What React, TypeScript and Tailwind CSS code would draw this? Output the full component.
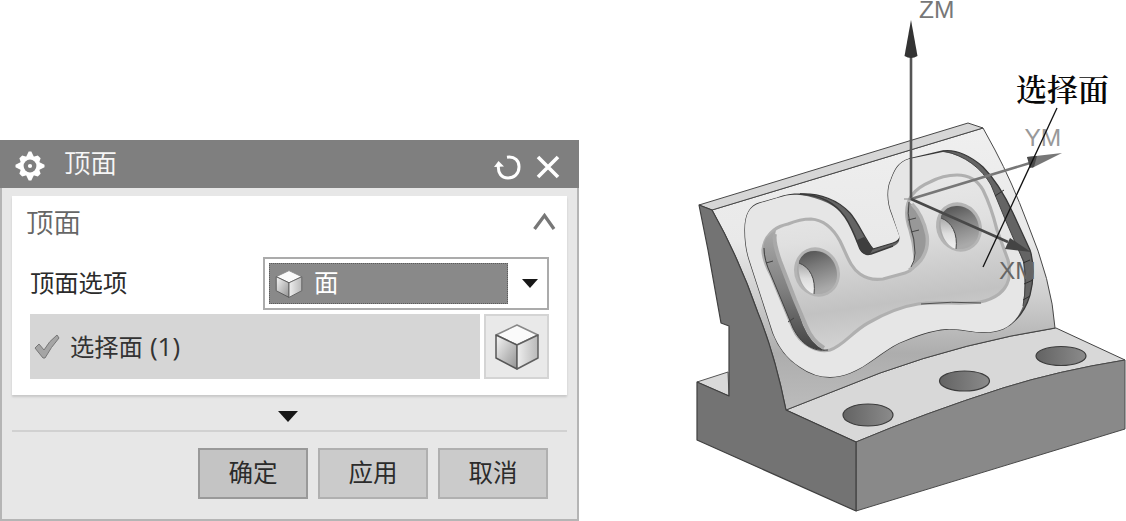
import React from "react";

const OUTER_POCKET =
  "M745 230C745 215 749 206 760 203L777 198C786 195 792 194 800 194C820 193 838 200 850 213C858 222 865 239 873 249L893 243Q900 241 900 236L892 214C887 202 887 188 891 180C895 169 899 162 909 159L943 151C957 149 972 157 983 167C997 181 1006 198 1013 213L1030 250C1034 262 1034 280 1030 295C1025 312 1015 323 1003 329C983 337 965 328 947 329C931 330 915 336 899 343C881 352 868 366 850 373Q840 377 830 377Q814 377 800 367C786 358 778 346 773 333L750 262Q745 248 745 230Z";

const RING =
  "M745 230C745 215 749 206 760 203L777 198C786 195 792 194 800 195C822 198 837 206 845 217C853 229 857 242 860 249Q864 256 871 254L894 246Q901 243 899 235L892 214C887 202 887 188 891 180C895 169 899 162 909 159L943 152C965 155 982 169 991 185L1005 219L1018 249L1023 262Q1026 284 1023 306C1019 317 1012 325 1003 329C983 337 965 328 947 329C931 330 915 336 899 343C881 352 868 366 850 373Q840 377 830 377Q814 377 800 367C786 358 778 346 773 333L750 262Q745 248 745 230Z";

const INNER_POCKET =
  "M763 250Q764 238 774 230Q779 226 788 224Q800 219 811 219C825 220 834 230 840 241C847 255 850 267 860 274Q870 281 883 279L905 273Q916 270 915 258Q914 243 910 230C905 216 905 205 912 195Q918 187 930 182Q943 175 957 175C970 175 978 181 983 190C990 204 994 218 997 230L1008 260C1012 275 1008 287 999 294Q991 300 980 302C960 305 938 301 918 304C898 307 882 315 868 323C852 332 843 346 830 350C817 353 800 344 793 328L771 275Q763 260 763 250Z";

function Bore() {
  return (
    <>
      <ellipse cx="817" cy="272" rx="21" ry="23.5" transform="rotate(-25 817 272)" fill="#a9a9a9" stroke="#b4b4b4" strokeWidth="3" />
      <path d="M799 261Q804 250 816 251C829 252 837 263 837 275C837 287 828 295 815 294Q801 287 799 272Z" fill="url(#bore)" />
      <path d="M799 263C810 267 816 279 814 294C804 291 797 278 799 263Z" fill="url(#glint)" />
      <path d="M799 263C810 267 816 279 814 294" stroke="#484848" />
    </>
  );
}

function PartDrawing() {
  return (
    <svg
      className="block shrink-0"
      width="547"
      height="521"
      viewBox="579 0 547 521"
      fill="none"
      strokeLinejoin="round"
      role="img"
    >
      <defs>
        <linearGradient id="surface" x1="0" y1="0" x2="0" y2="1">
          <stop offset="0" stopColor="#efefef" />
          <stop offset="0.4" stopColor="#e9e9e9" />
          <stop offset="0.6" stopColor="#cecece" />
          <stop offset="0.8" stopColor="#adadad" />
          <stop offset="1" stopColor="#bcbcbc" />
        </linearGradient>
        <linearGradient id="floor" x1="0" y1="0" x2="0.2" y2="1">
          <stop offset="0" stopColor="#ececec" />
          <stop offset="0.4" stopColor="#e0e0e0" />
          <stop offset="0.8" stopColor="#c2c2c2" />
          <stop offset="1" stopColor="#d2d2d2" />
        </linearGradient>
        <linearGradient id="bore" x1="0" y1="0" x2="0.3" y2="1">
          <stop offset="0" stopColor="#4e4e4e" />
          <stop offset="0.4" stopColor="#777777" />
          <stop offset="1" stopColor="#aaaaaa" />
        </linearGradient>
        <linearGradient id="glint" x1="0" y1="0" x2="0" y2="1">
          <stop offset="0" stopColor="#a8a8a8" />
          <stop offset="0.5" stopColor="#dddddd" />
          <stop offset="1" stopColor="#f2f2f2" />
        </linearGradient>
        <linearGradient id="boltHole">
          <stop offset="0" stopColor="#636363" />
          <stop offset="1" stopColor="#8b8b8b" />
        </linearGradient>
        <linearGradient id="wall" x1="0" y1="0" x2="0" y2="1">
          <stop offset="0" stopColor="#aaaaaa" />
          <stop offset="0.5" stopColor="#7f7f7f" />
          <stop offset="1" stopColor="#424242" />
        </linearGradient>
      </defs>

      {/* Base block */}
      <path d="M697 382L728 372L729 396Z" fill="#d9d9d9" stroke="#555" />
      <path
        d="M786 410L880 373Q966 342 1056 328L1125 360Q1057 371 1003 388Q925 413 856 442Z"
        fill="#d8d8d8"
        stroke="#444"
      />
      <path
        d="M856 442Q925 413 1003 388Q1057 371 1125 360V429L856 511Z"
        fill="#898989"
        stroke="#494949"
      />

      {/* Inclined surface and its top edge */}
      <path
        d="M712 210L983 128L995 150Q1012 182 1027 222Q1052 282 1055 328Q966 342 880 373L786 410Q775 355 758 313Q739 258 712 210Z"
        fill="url(#surface)"
        stroke="#484848"
      />
      <path d="M699 205L968 123L983 128L712 210Z" fill="#d6d6d6" stroke="#484848" />
      <path
        d="M699 205L712 210Q739 258 758 313Q775 355 786 410L856 442V511L697 440V382L729 396V326L721 323L708 250Z"
        fill="#737373"
        stroke="#404040"
        strokeWidth="1.2"
      />

      {/* Raised contour and recessed pocket */}
      <path d={OUTER_POCKET} fill="#646464" stroke="#383838" strokeWidth="1.3" />
      <path d={RING} fill="#e6e6e6" />
      <path
        d="M800 194C822 195 836 204 845 217C853 229 857 242 860 249Q864 256 871 254L893 246"
        stroke="#3a3a3a"
        strokeWidth="1.5"
      />
      <path d="M857 240L864 237L873 249L870 254Q863 256 860 249Z" fill="#3e3e3e" />
      <path d="M943 151C965 155 982 169 991 185L1005 219L1018 249L1024 262Q1027 284 1023 306" stroke="#444" />
      <path
        d="M1004 190L995 196M1030 260L1023 263M1033 280L1024 284M1030 296L1023 300"
        stroke="#303030"
      />
      <path d={INNER_POCKET} fill="url(#floor)" stroke="#b0b0b0" strokeWidth="3.2" />
      <path
        d="M763 248Q764 236 776 230Q773 241 779 257L792 293L803 325Q811 344 824 350C808 350 799 340 793 328L771 275Q763 260 763 248Z"
        fill="url(#wall)"
      />
      <path d="M775 234Q773 241 780 261L795 300L806 326Q812 341 824 348" stroke="#a9a9a9" strokeWidth="4" />
      <path
        d="M764 248Q764 260 771 275L793 328C801 344 813 352 828 350M766 263L773 261M788 322L794 318"
        stroke="#414141"
      />
      <path
        d="M909 202Q922 211 927 235Q929 249 921 260Q915 268 909 269Q917 263 915 253Q914 241 910 230Q904 214 909 202Z"
        fill="#989898"
      />
      <path d="M912 204Q923 215 927 235Q929 249 921 260Q915 267 909 270" stroke="#b4b4b4" strokeWidth="3.5" />
      <path
        d="M909 202Q907 213 910 225Q915 239 915 253Q915 261 911 267M908 220L916 218M911 232L919 230"
        stroke="#464646"
      />
      <path d="M921 304Q952 301 981 303" stroke="#505050" />

      {/* Through holes */}
      <Bore />
      <g transform="translate(142 -45)">
        <Bore />
      </g>
      <g fill="url(#boltHole)" stroke="#3c3c3c" strokeWidth="1.2">
        <ellipse cx="868" cy="415" rx="25" ry="11" />
        <ellipse cx="964.5" cy="381" rx="25" ry="10" />
        <ellipse cx="1061" cy="356" rx="25" ry="9.5" />
      </g>

      {/* Coordinate axes */}
      <path d="M911 200V56" stroke="#555" strokeWidth="2.6" />
      <path d="M911 20L917.5 56Q911 60 904.5 56Z" fill="#333" />
      <path d="M911 199L1030 163" stroke="#777" strokeWidth="2.6" />
      <path d="M1062 153L1027 157L1032 168Z" fill="#777" />
      <path d="M1027 157L1037 156L1034 167L1030 168Z" fill="#4b4b4b" />
      <path d="M911 199L1008 242" stroke="#484848" strokeWidth="2.6" />
      <path d="M1031 252L1010 238L1005 249Z" fill="#444" />
      <path d="M904 199H911" stroke="#888" />
      <g fontFamily="Liberation Sans, Arial, sans-serif" fontSize="24.5">
        <text x="919" y="18" fill="#777">ZM</text>
        <text x="1024.5" y="146" fill="#999">YM</text>
        <text x="999" y="279" fill="#666">XM</text>
      </g>

      {/* Callout */}
      <path d="M1057 108L983 267" stroke="#111" strokeWidth="1.3" />
      <text
        x="1016"
        y="101"
        fill="#080808"
        fontFamily="'Noto Serif CJK SC', 'Noto Sans CJK SC', serif"
        fontSize="31"
        fontWeight="600"
      >
        选择面
      </text>
    </svg>
  );
}

function CubeIcon({ size }: { size: number }) {
  const id = `cube-${size}`;
  return (
    <svg width={size} height={size} viewBox="0 0 46 46" strokeLinejoin="round">
      <defs>
        <linearGradient id={id} x1="0" y1="0" x2="1" y2="1">
          <stop offset="0" stopColor="#f6f6f6" />
          <stop offset="1" stopColor="#929292" />
        </linearGradient>
        <linearGradient id={`${id}-right`}>
          <stop offset="0" stopColor="#eee" />
          <stop offset="1" stopColor="#b9b9b9" />
        </linearGradient>
      </defs>
      <path d="M23 1L44 11L23 21L2 11Z" fill="#fafafa" stroke="#888" strokeWidth="1.5" />
      <path d="M2 11L23 21V45L2 34Z" fill={`url(#${id})`} stroke="#555" strokeWidth="1.5" />
      <path d="M44 11L23 21V45L44 34Z" fill={`url(#${id}-right)`} stroke="#606060" strokeWidth="1.5" />
    </svg>
  );
}

function GearIcon() {
  return (
    <svg width="30" height="30" viewBox="-15 -15 30 30">
      <g fill="#fff">
        {[0, 90].map((angle) => (
          <path key={angle} d="M-4-9L-1.3-14.5H1.3L4-9V9L1.3 14.5H-1.3L-4 9Z" transform={`rotate(${angle})`} />
        ))}
        {[45, 135].map((angle) => (
          <path key={angle} d="M-4-9L-2-13H2L4-9V9L2 13H-2L-4 9Z" transform={`rotate(${angle})`} />
        ))}
        <circle r="9.8" />
      </g>
      <circle r="6.4" fill="#7f7f7f" />
      <circle r="2.1" fill="#fff" />
    </svg>
  );
}

function DialogHeader() {
  return (
    <header className="flex h-12 shrink-0 items-center bg-[#7f7f7f] pr-[19px] pl-[15px] text-white">
      <div className="pt-1"><GearIcon /></div>
      <h1 className="ml-[19px] flex-1 pb-px text-[26.5px] leading-none font-[350] text-[#f6f6f6]">顶面</h1>
      <svg className="mt-1.5 mr-[14px]" width="28" height="27" viewBox="0 0 28 27" fill="none">
        <path d="M13 3.2C21 2 25.2 7 25 13C25 20 20 24 14 24C7.5 24 3.5 19 4.5 11" stroke="#fff" strokeWidth="3" />
        <path d="M0 13L4.5 7L10 12.5Z" fill="#fff" />
      </svg>
      <svg className="mt-1.5" width="24" height="24" viewBox="0 0 24 24">
        <path d="M2 2L22 22M22 2L2 22" stroke="#fff" strokeWidth="3.6" />
      </svg>
    </header>
  );
}

function TopFaceDialog() {
  return (
    <section className="mt-[140px] flex h-[381px] w-[579px] shrink-0 flex-col">
      <DialogHeader />
      <div className="flex flex-1 flex-col border-2 border-t-0 border-[#b5b5b5] bg-[#e7e7e7] px-[10px] pt-2">
        <div className="h-[199px] shrink-0 bg-white px-[18px] shadow-[0_2px_2px_#c8c8c8]">
          <div className="flex h-[61px] items-start justify-between">
            <h2 className="-ml-1 pt-[13px] text-[27.5px] leading-none font-[350] text-[#666]">顶面</h2>
            <svg className="-mr-[7px] mt-[16px]" width="24" height="18" viewBox="0 0 24 18">
              <path d="M2.5 17L12.5 3.5L22 17" fill="none" stroke="#777" strokeWidth="3.3" />
            </svg>
          </div>
          <div className="flex h-[53px] items-center justify-between">
            <span className="text-[24.3px] leading-none text-[#2b2b2b]">顶面选项</span>
            <button className="flex h-[53px] w-[286px] items-center border-2 border-[#ababab] bg-white p-1 text-left">
              <span className="flex h-[41px] w-[239px] items-center gap-[11px] border border-dotted border-[#5b5b5b] bg-[#898989] pl-[5px] text-[24.5px] leading-none text-white">
                <CubeIcon size={28} />面
              </span>
              <svg className="ml-[14px]" width="16" height="9" viewBox="0 0 16 9"><path d="M0 0H16L8 9Z" fill="#171717" /></svg>
            </button>
          </div>
          <div className="mt-1 flex h-[65px] gap-1">
            <div className="flex flex-1 items-center bg-[#d6d6d6] pl-1 text-[24.3px] leading-none text-[#333]">
              <svg width="26" height="25" viewBox="0 0 26 25">
                <path d="M1 14L5 10L10 16Q15 7 23 1L25 4Q17 13 11 24H9Z" fill="#a5a5a5" stroke="#777" />
              </svg>
              <span className="ml-[10px] pb-px">选择面<span className="ml-[7px] text-[26px] leading-none">(1)</span></span>
            </div>
            <button className="flex w-[65px] items-center justify-center border-2 border-[#d4d4d4] bg-[#e9e9e9]">
              <CubeIcon size={46} />
            </button>
          </div>
        </div>
        <div className="flex h-[37px] shrink-0 items-center justify-center border-b-2 border-[#d1d1d1] pt-2 pr-1">
          <svg width="20" height="11" viewBox="0 0 20 11"><path d="M0 0H20L10 11Z" fill="#171717" /></svg>
        </div>
        <div className="flex justify-end gap-[10px] pt-4 pr-[19px] text-[24.5px] leading-none text-[#2b2b2b]">
          <button className="h-[51px] w-[110px] border-2 border-[#999] bg-[#c4c4c4]">确定</button>
          <button className="h-[51px] w-[110px] border-2 border-[#b0b0b0] bg-[#cbcbcb]">应用</button>
          <button className="h-[51px] w-[110px] border-2 border-[#b0b0b0] bg-[#cbcbcb]">取消</button>
        </div>
      </div>
    </section>
  );
}

export default function App() {
  return (
    <main className="flex h-[521px] w-[1126px] overflow-hidden bg-white font-['Open_Sans','Noto_Sans_CJK_SC',sans-serif]">
      <TopFaceDialog />
      <PartDrawing />
    </main>
  );
}
